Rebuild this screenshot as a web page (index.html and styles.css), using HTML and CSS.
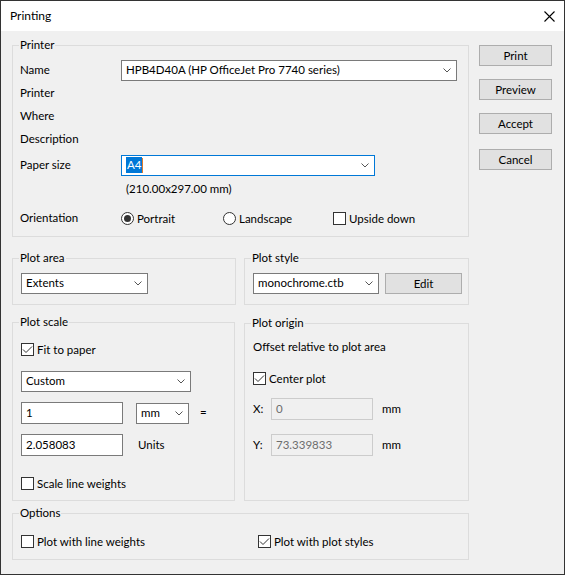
FILE: index.html
```html
<!DOCTYPE html>
<html>
<head>
<meta charset="utf-8">
<link rel="stylesheet" href="styles.css">
</head>
<body>
<div class="window">
  <div class="titlebar">
    <span class="title">Printing</span>
    <svg class="close" width="11" height="11" viewBox="0 0 11 11"><path d="M0.5 0.5 L10.5 10.5 M10.5 0.5 L0.5 10.5" stroke="#000" stroke-width="1.1" fill="none"/></svg>
  </div>
  <div class="content">
    <div class="main">
      <div class="group printer">
        <span class="group-title">Printer</span>
        <div class="prow">
          <span class="plabel">Name</span>
          <div class="combo combo-name"><span class="val">HPB4D40A (HP OfficeJet Pro 7740 series)</span><svg class="chev" width="8" height="5" viewBox="0 0 8 5"><polyline points="0.5,0.5 4,4 7.5,0.5" fill="none" stroke="#555" stroke-width="1"/></svg></div>
        </div>
        <div class="prow gap2"><span class="plabel">Printer</span></div>
        <div class="prow gap2"><span class="plabel">Where</span></div>
        <div class="prow gap2"><span class="plabel">Description</span></div>
        <div class="prow gap5">
          <span class="plabel">Paper size</span>
          <div class="combo combo-paper focused"><span class="val"><span class="sel">A4</span><span class="caret"></span></span><svg class="chev" width="8" height="5" viewBox="0 0 8 5"><polyline points="0.5,0.5 4,4 7.5,0.5" fill="none" stroke="#555" stroke-width="1"/></svg></div>
        </div>
        <div class="prow gap2">
          <span class="plabel"></span>
          <span class="dims">(210.00x297.00 mm)</span>
        </div>
        <div class="prow gap9">
          <span class="plabel">Orientation</span>
          <span class="opt opt-portrait"><span class="radio"><span class="dot"></span></span>Portrait</span>
          <span class="opt opt-landscape"><span class="radio"></span>Landscape</span>
          <span class="opt"><span class="box"></span>Upside down</span>
        </div>
      </div>

      <div class="group-row row-area">
        <div class="group plot-area">
          <span class="group-title">Plot area</span>
          <div class="combo combo-area"><span class="val">Extents</span><svg class="chev" width="8" height="5" viewBox="0 0 8 5"><polyline points="0.5,0.5 4,4 7.5,0.5" fill="none" stroke="#555" stroke-width="1"/></svg></div>
        </div>
        <div class="group plot-style">
          <span class="group-title">Plot style</span>
          <div class="combo combo-style"><span class="val">monochrome.ctb</span><svg class="chev" width="8" height="5" viewBox="0 0 8 5"><polyline points="0.5,0.5 4,4 7.5,0.5" fill="none" stroke="#555" stroke-width="1"/></svg></div>
          <div class="btn btn-edit">Edit</div>
        </div>
      </div>

      <div class="group-row row-scale">
        <div class="group plot-scale">
          <span class="group-title">Plot scale</span>
          <span class="opt"><span class="box"><svg width="11" height="11" viewBox="0 0 11 11"><polyline points="1,5.5 4,8.5 10,2.5" fill="none" stroke="#333" stroke-width="1"/></svg></span>Fit to paper</span>
          <div class="combo combo-custom"><span class="val">Custom</span><svg class="chev" width="8" height="5" viewBox="0 0 8 5"><polyline points="0.5,0.5 4,4 7.5,0.5" fill="none" stroke="#555" stroke-width="1"/></svg></div>
          <div class="srow srow1">
            <div class="input">1</div>
            <div class="combo combo-mm"><span class="val">mm</span><svg class="chev" width="8" height="5" viewBox="0 0 8 5"><polyline points="0.5,0.5 4,4 7.5,0.5" fill="none" stroke="#555" stroke-width="1"/></svg></div>
            <span class="eq">=</span>
          </div>
          <div class="srow srow2">
            <div class="input">2.058083</div>
            <span class="units">Units</span>
          </div>
          <span class="opt opt-slw"><span class="box"></span>Scale line weights</span>
        </div>
        <div class="group plot-origin">
          <span class="group-title">Plot origin</span>
          <div class="otext">Offset relative to plot area</div>
          <span class="opt opt-center"><span class="box"><svg width="11" height="11" viewBox="0 0 11 11"><polyline points="1,5.5 4,8.5 10,2.5" fill="none" stroke="#333" stroke-width="1"/></svg></span>Center plot</span>
          <div class="orow orow-x">
            <span class="olabel">X:</span>
            <div class="input disabled">0</div>
            <span class="ounit">mm</span>
          </div>
          <div class="orow orow-y">
            <span class="olabel">Y:</span>
            <div class="input disabled">73.339833</div>
            <span class="ounit">mm</span>
          </div>
        </div>
      </div>

      <div class="group options">
        <span class="group-title">Options</span>
        <span class="opt opt-lw"><span class="box"></span>Plot with line weights</span>
        <span class="opt"><span class="box"><svg width="11" height="11" viewBox="0 0 11 11"><polyline points="1,5.5 4,8.5 10,2.5" fill="none" stroke="#333" stroke-width="1"/></svg></span>Plot with plot styles</span>
      </div>
    </div>

    <div class="buttons">
      <div class="btn">Print</div>
      <div class="btn btn-preview">Preview</div>
      <div class="btn btn-accept">Accept</div>
      <div class="btn btn-cancel">Cancel</div>
    </div>
  </div>
</div>
</body>
</html>
```

FILE: styles.css
```css
body {
  margin: 0;
  font-family: Lato, "Noto Sans", sans-serif;
  font-size: 11.5px;
  line-height: 16px;
  color: #000;
}

.window {
  width: 565px;
  height: 575px;
  box-sizing: border-box;
  border: 1px solid #333;
  background: #f0f0f0;
  display: flex;
  flex-direction: column;
}

.titlebar {
  height: 30px;
  flex: none;
  background: #fff;
  display: flex;
  align-items: center;
  justify-content: space-between;
  padding: 0 9px 0 9px;
  font-size: 12px;
}

.close {
  display: block;
  margin-top: 1px;
}

.content {
  display: flex;
  align-items: flex-start;
  padding-left: 11px;
  gap: 10px;
}

.main {
  width: 457px;
  display: flex;
  flex-direction: column;
}

.group {
  position: relative;
  box-sizing: border-box;
  border: 1px solid #dcdcdc;
}

.group-title {
  position: absolute;
  top: -9px;
  left: 6px;
  padding: 0 1px;
  background: #f0f0f0;
  line-height: 16px;
}

/* Printer */
.printer {
  margin-top: 14px;
  height: 192px;
  padding: 14px 7px 0 7px;
}

.prow {
  display: flex;
  align-items: center;
  height: 21px;
}

.gap2 { margin-top: 2px; }
.gap5 { margin-top: 5px; }
.gap9 { margin-top: 9px; }

.plabel {
  width: 101px;
  flex: none;
  padding-bottom: 2px;
}

.combo {
  height: 21px;
  box-sizing: border-box;
  border: 1px solid #7a7a7a;
  background: #fff;
  display: flex;
  align-items: center;
  padding-left: 4px;
  flex: none;
}

.combo .val {
  flex: 1;
  white-space: nowrap;
  display: flex;
  align-items: center;
  padding-bottom: 1px;
}

.chev {
  display: block;
  margin-right: 5px;
  flex: none;
}

.combo-name { width: 336px; }
.combo-paper { width: 254px; }

.focused {
  border-color: #0078d7;
}

.sel {
  background: #0078d7;
  color: #fff;
  line-height: 16px;
  padding: 0 1px;
}

.caret {
  display: inline-block;
  width: 1px;
  height: 15px;
  background: #e07a2a;
}

.dims {
  padding-left: 5px;
}

.opt {
  display: flex;
  align-items: center;
  height: 13px;
  white-space: nowrap;
}

.opt-portrait { width: 102px; }
.opt-landscape { width: 110px; }

.radio {
  width: 13px;
  height: 13px;
  box-sizing: border-box;
  border: 1px solid #333;
  border-radius: 50%;
  background: #fff;
  display: flex;
  align-items: center;
  justify-content: center;
  margin-right: 3px;
  flex: none;
}

.dot {
  width: 7px;
  height: 7px;
  border-radius: 50%;
  background: #333;
}

.box {
  width: 13px;
  height: 13px;
  box-sizing: border-box;
  border: 1px solid #333;
  background: #fff;
  margin-right: 3px;
  flex: none;
}

.box svg {
  display: block;
}

/* Buttons */
.buttons {
  margin-top: 14px;
  width: 73px;
  display: flex;
  flex-direction: column;
}

.btn {
  height: 21px;
  box-sizing: border-box;
  border: 1px solid #adadad;
  background: #e1e1e1;
  display: flex;
  align-items: center;
  justify-content: center;
}

.btn-preview { margin-top: 13px; }
.btn-accept { margin-top: 13px; }
.btn-cancel { margin-top: 15px; }

/* Rows of groups */
.group-row {
  display: flex;
  justify-content: space-between;
  align-items: flex-start;
}

.row-area {
  margin-top: 21px;
}

.plot-area {
  width: 224px;
  height: 47px;
  padding: 14px 0 0 8px;
}

.combo-area { width: 127px; }

.plot-style {
  width: 225px;
  height: 47px;
  padding: 14px 0 0 8px;
  display: flex;
  align-items: flex-start;
  gap: 6px;
}

.combo-style { width: 126px; }

.btn-edit {
  width: 77px;
}

.row-scale {
  margin-top: 17px;
}

.plot-scale {
  width: 223px;
  height: 179px;
  padding: 20px 0 0 8px;
  display: flex;
  flex-direction: column;
  align-items: flex-start;
}

.combo-custom {
  width: 170px;
  margin-top: 15px;
}

.srow {
  display: flex;
  align-items: center;
  margin-top: 10px;
}

.input {
  width: 102px;
  height: 22px;
  box-sizing: border-box;
  border: 1px solid #7a7a7a;
  background: #fff;
  padding: 0 0 1px 4px;
  display: flex;
  align-items: center;
  flex: none;
}

.input.disabled {
  border-color: #cccccc;
  background: #f0f0f0;
  color: #6d6d6d;
}

.combo-mm {
  width: 53px;
  margin-left: 13px;
}

.eq {
  margin-left: 11px;
  padding-bottom: 3px;
}

.units {
  margin-left: 15px;
}

.opt-slw {
  margin-top: 21px;
}

.plot-origin {
  width: 225px;
  height: 178px;
  margin-top: 1px;
  padding: 15px 0 0 8px;
  display: flex;
  flex-direction: column;
  align-items: flex-start;
}

.opt-center {
  margin-top: 17px;
}

.orow {
  display: flex;
  align-items: center;
}

.orow-x { margin-top: 13px; }
.orow-y { margin-top: 14px; }

.olabel {
  width: 18px;
  flex: none;
}

.ounit {
  margin-left: 9px;
}

/* Options */
.options {
  margin-top: 12px;
  height: 47px;
  padding: 21px 0 0 8px;
  display: flex;
  align-items: flex-start;
}

.opt-lw {
  width: 237px;
}
```
